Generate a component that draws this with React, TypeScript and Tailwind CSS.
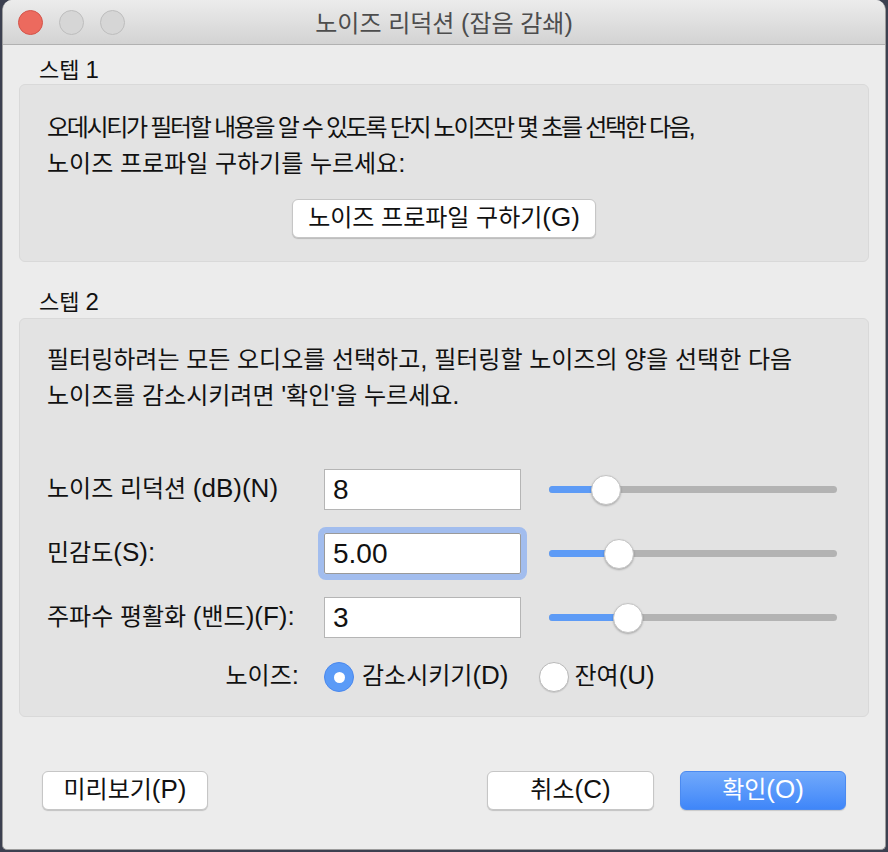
import React from 'react';

// Hangul runs render smaller than Latin runs, like the system font in the shot
function T({ text, ko = 'text-[24px]', la = 'text-[26px]' }: { text: string; ko?: string; la?: string }) {
  const parts = text.split(/([가-힣 ]+)/).filter(Boolean);
  return (
    <>
      {parts.map((p, i) =>
        /[가-힣]/.test(p) ? (
          <span key={i} className={ko}>{p}</span>
        ) : (
          <span key={i} className={la}>{p}</span>
        )
      )}
    </>
  );
}

function Button({ label, primary = false, width = 'w-[166px]' }: { label: string; primary?: boolean; width?: string }) {
  return (
    <div
      className={
        primary
          ? `${width} h-[39px] flex items-center justify-center rounded-[6px] border border-[#4b8af0] bg-gradient-to-b from-[#71a9fb] to-[#3f86f9] text-white shadow-[0_1px_1px_rgba(0,0,0,0.15)]`
          : `${width} h-[39px] flex items-center justify-center rounded-[6px] border border-[#c6c6c6] bg-white text-[#111] shadow-[0_1px_1px_rgba(0,0,0,0.18)]`
      }
    >
      <span className="leading-[39px]">
        <T text={label} />
      </span>
    </div>
  );
}

function Slider({ pos }: { pos: number }) {
  return (
    <div className="relative w-[288px] h-[30px] flex items-center">
      <div className="w-full h-[7px] rounded-full bg-[#b3b3b3]" />
      <div className="absolute left-0 h-[7px] rounded-full bg-[#5d9bf6]" style={{ width: pos }} />
      <div
        className="absolute w-[30px] h-[30px] rounded-full bg-white border border-[#c4c4c4] shadow-[0_1px_2px_rgba(0,0,0,0.25)]"
        style={{ left: pos - 15 }}
      />
    </div>
  );
}

function Row({ label, value, pos, focused = false }: { label: string; value: string; pos: number; focused?: boolean }) {
  return (
    <div className="flex items-center h-[41px]">
      <div className="w-[277px] leading-[41px] text-[#111]">
        <T text={label} />
      </div>
      <div
        className={
          focused
            ? 'w-[197px] h-[41px] bg-white border border-[#9a9a9a] rounded-[2px] outline outline-[6px] outline-[#a2bdee] pl-[8px] flex items-center'
            : 'w-[197px] h-[41px] bg-white border border-[#b5b5b5] pl-[8px] flex items-center'
        }
      >
        <span className="text-[28px] text-[#111]">{value}</span>
      </div>
      <div className="ml-[28px]">
        <Slider pos={pos} />
      </div>
    </div>
  );
}

export default function App() {
  return (
    <div className="w-[888px] h-[852px] bg-[#3c4050] overflow-hidden font-['Liberation_Sans','Noto_Sans_CJK_KR',sans-serif]">
      <div className="ml-[2px] w-[884px] h-[850px] rounded-t-[10px] rounded-b-[5px] overflow-hidden bg-[#ececec] border-x border-b border-[#9c9c9c]">
        {/* title bar */}
        <div className="relative h-[45px] bg-gradient-to-b from-[#ececec] to-[#d3d3d3] border-b border-[#b1b1b1] flex items-center justify-center">
          <div className="absolute left-[15px] top-[10px] flex gap-[16px]">
            <div className="w-[25px] h-[25px] rounded-full bg-[#ec6a5e] border border-[#d3544a]" />
            <div className="w-[25px] h-[25px] rounded-full bg-[#d6d6d6] border border-[#bdbdbd]" />
            <div className="w-[25px] h-[25px] rounded-full bg-[#d6d6d6] border border-[#bdbdbd]" />
          </div>
          <div className="pt-[5px] text-[#4d4d4d] leading-[44px]">
            <T text="노이즈 리덕션 (잡음 감쇄)" la="text-[25px]" />
          </div>
        </div>

        <div className="px-[16px] pt-[12px]">
          {/* step 1 */}
          <div className="h-[26px] leading-[26px] pl-[20px] text-[#111]">
            <T text="스텝 1" ko="text-[22px]" la="text-[24px]" />
          </div>
          <div className="mt-[1px] h-[178px] rounded-[6px] bg-[#e3e3e3] border border-[#d9d9d9] pl-[27px] pt-[26px]">
            <p className="leading-[33px] text-[#111]">
              <span className="tracking-[-2.3px]">
                <T text="오데시티가 필터할 내용을 알 수 있도록 단지 노이즈만 몇 초를 선택한 다음," />
              </span>
              <br />
              <T text="노이즈 프로파일 구하기를 누르세요:" />
            </p>
            <div className="mt-[16px] flex justify-center pr-[27px]">
              <Button label="노이즈 프로파일 구하기(G)" width="w-[304px]" />
            </div>
          </div>

          {/* step 2 */}
          <div className="mt-[27px] h-[26px] leading-[26px] pl-[20px] text-[#111]">
            <T text="스텝 2" ko="text-[22px]" la="text-[24px]" />
          </div>
          <div className="mt-[3px] h-[399px] rounded-[6px] bg-[#e3e3e3] border border-[#d9d9d9] pl-[27px] pt-[24px]">
            <p className="leading-[33px] text-[#111]">
              <T text="필터링하려는 모든 오디오를 선택하고, 필터링할 노이즈의 양을 선택한 다음" />
              <br />
              <T text="노이즈를 감소시키려면 '확인'을 누르세요." />
            </p>
            <div className="mt-[54px] flex flex-col gap-[23px]">
              <Row label="노이즈 리덕션 (dB)(N)" value="8" pos={57} />
              <Row label="민감도(S):" value="5.00" pos={70} focused />
              <Row label="주파수 평활화 (밴드)(F):" value="3" pos={79} />
            </div>
            <div className="mt-[24px] flex items-center h-[30px] text-[#111]">
              <div className="w-[277px] pr-[25px] text-right leading-[30px]">
                <T text="노이즈:" />
              </div>
              <div className="w-[30px] h-[30px] rounded-full bg-[#5b9bf7] border border-[#4a88ee] flex items-center justify-center">
                <div className="w-[11px] h-[11px] rounded-full bg-white" />
              </div>
              <div className="ml-[8px] leading-[30px]">
                <T text="감소시키기(D)" />
              </div>
              <div className="ml-[30px] w-[30px] h-[30px] rounded-full bg-white border border-[#b9b9b9] shadow-[0_1px_1px_rgba(0,0,0,0.12)]" />
              <div className="ml-[6px] leading-[30px]">
                <T text="잔여(U)" />
              </div>
            </div>
          </div>

          {/* buttons */}
          <div className="mt-[54px] px-[23px] flex items-center">
            <Button label="미리보기(P)" />
            <div className="flex-1" />
            <Button label="취소(C)" width="w-[167px]" />
            <div className="ml-[26px]">
              <Button label="확인(O)" primary />
            </div>
          </div>
        </div>
      </div>
    </div>
  );
}
